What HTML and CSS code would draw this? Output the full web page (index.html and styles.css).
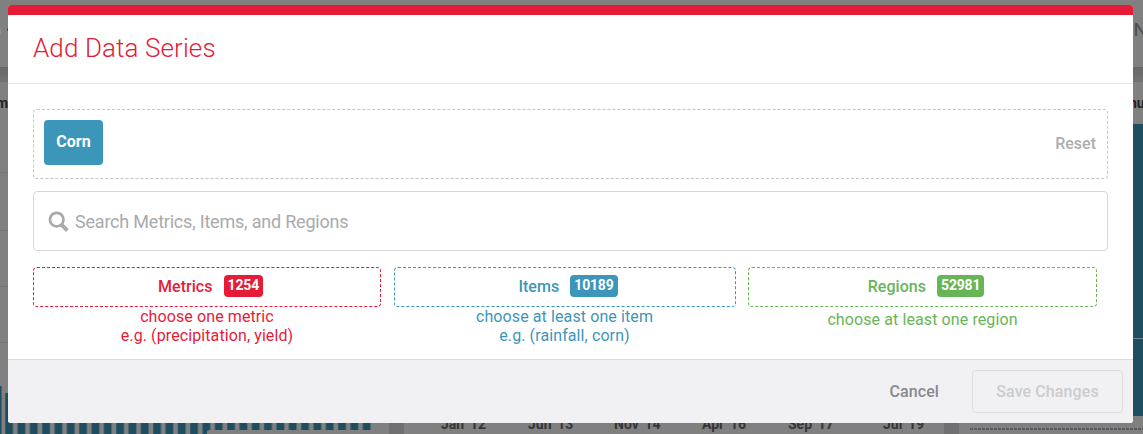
FILE: index.html
```html
<!DOCTYPE html>
<html lang="en">
<head>
<meta charset="utf-8">
<title>Add Data Series</title>
<link rel="stylesheet" href="styles.css">
</head>
<body>
<svg class="dashboard" width="1143" height="434" viewBox="0 0 1143 434" aria-hidden="true">
  <defs>
    <linearGradient id="shade" x1="0" y1="0" x2="0" y2="1"><stop offset="0" stop-color="#676767"/><stop offset="1" stop-color="#747474"/></linearGradient>
    <pattern id="bars" x="5" y="0" width="12.33" height="434" patternUnits="userSpaceOnUse"><rect width="8.2" height="434" fill="#426473"/><rect x=".6" width="7" height="434" fill="#1f4d60"/></pattern>
  </defs>
  <rect width="1143" height="434" fill="#808080"/>
  <rect y="67" width="1143" height="15" fill="url(#shade)"/>
  <path d="M7 29.5h3" stroke="#333" stroke-width="2"/>
  <path d="M0 29q1 2 0 5" stroke="#999" fill="none"/>
  <text class="bg-heading" x="-4" y="108">m</text>
  <path d="M0 172.5h8M0 230.5h8M0 286.5h8M0 342.5h8M0 398.5h8" stroke="#757575"/>
  <rect y="386" width="1.5" height="48" fill="#1f4d60"/>
  <rect x="5" y="393" width="367" height="41" fill="url(#bars)"/>
  <path d="M207 434v-2q0-2 2-2h165v4z" fill="#808080"/>
  <rect x="389" y="423" width="15" height="11" fill="#707070"/>
  <rect x="944" y="423" width="15" height="11" fill="#707070"/>
  <g class="bg-axis">
    <text x="441" y="429">Jan '12</text><text x="528" y="429">Jun '13</text><text x="614" y="429">Nov '14</text>
    <text x="702" y="429">Apr '16</text><text x="788" y="429">Sep '17</text><text x="883" y="429">Jul '19</text>
  </g>
  <path d="M970 429h173" stroke="#5c5c5c" stroke-width="2" stroke-dasharray="3 1"/>
  <text class="bg-nav" x="1133.5" y="36">N</text>
  <text class="bg-heading" x="1129" y="108">nu</text>
  <rect x="1133" y="124" width="10" height="292" fill="#1f4d60"/>
  <path d="M1133 338.5h10" stroke="#71858d"/>
</svg>
<main class="modal" role="dialog" aria-labelledby="dialog-title">
  <header class="modal-header"><h1 class="title" id="dialog-title">Add Data Series</h1></header>
  <section class="modal-body">
    <div class="selection"><span class="tag">Corn</span><span class="reset">Reset</span></div>
    <div class="search">
      <svg class="search-icon" width="21" height="21" viewBox="0 0 21 21"><circle cx="8.7" cy="8.6" r="6.8" fill="none" stroke="#a8a9ab" stroke-width="2.7"/><path d="M13.4 13.6l6 6" stroke="#a8a9ab" stroke-width="3.8"/></svg>
      <span class="placeholder">Search Metrics, Items, and Regions</span>
    </div>
    <div class="categories">
      <div class="category metrics">
        <div class="category-box"><span class="category-name">Metrics</span><span class="badge">1254</span></div>
        <p class="hint">choose one metric<br>e.g. (precipitation, yield)</p>
      </div>
      <div class="category items">
        <div class="category-box"><span class="category-name">Items</span><span class="badge">10189</span></div>
        <p class="hint">choose at least one item<br>e.g. (rainfall, corn)</p>
      </div>
      <div class="category regions">
        <div class="category-box"><span class="category-name">Regions</span><span class="badge">52981</span></div>
        <p class="hint">choose at least one region</p>
      </div>
    </div>
  </section>
  <footer class="modal-footer"><span class="cancel">Cancel</span><span class="save">Save Changes</span></footer>
</main>
</body>
</html>
```
FILE: styles.css
```css
* { box-sizing: border-box; }
body { margin: 0; width: 1143px; height: 434px; overflow: hidden; padding: 5px 10px 0 8px; font-family: Roboto, sans-serif; font-size: 16px; background: #808080; }
.dashboard { position: absolute; left: 0; top: 0; }
.bg-heading { font-size: 14px; font-weight: 700; fill: #222; }
.bg-nav { font-size: 19px; fill: #4c4c4c; }
.bg-axis { font-size: 14px; font-weight: 700; fill: #353535; }
.modal { position: relative; display: flex; flex-direction: column; height: 418px; background: #fff; border-radius: 3px; overflow: hidden; }
.modal-header { height: 79px; border-top: 10px solid #e51b38; border-bottom: 1px solid #e7e7e8; padding: 16px 25px 0; }
.title { margin: 0; font-size: 26px; font-weight: 300; line-height: 34px; letter-spacing: .1px; color: #e51b38; }
.modal-body { flex: 1; padding: 25px 25px 0; }
.selection { display: flex; justify-content: space-between; height: 70px; padding: 10px; border: 1px dashed #c5c5c6; border-radius: 4px; }
.tag { width: 59px; height: 45px; line-height: 43px; text-align: center; border-radius: 4px; background: #3c96ba; color: #fff; font-weight: 700; }
.reset { line-height: 47px; margin-right: 1px; color: #adaeaf; font-weight: 500; }
.search { display: flex; align-items: center; gap: 6px; height: 60px; margin: 12px 0 16px; padding: 0 14px; border: 1px solid #d7d8d9; border-radius: 4px; }
.search-icon { margin-top: 1px; }
.placeholder { font-size: 18px; letter-spacing: -.21px; color: #a9aaab; }
.categories { display: grid; grid-template-columns: 348px 342px 349px; column-gap: 12.5px; }
.category-box { display: flex; justify-content: center; height: 40px; padding: 7px 0 0 7px; border: 1px dashed currentColor; border-radius: 4px; }
.category-name { font-weight: 500; line-height: 24px; letter-spacing: .05px; margin-right: 11px; }
.badge { height: 22px; line-height: 21px; padding: 0 4px; border-radius: 4px; background: #e51b38; color: #fff; font-size: 14px; font-weight: 700; letter-spacing: -.17px; }
.hint { margin: 0; line-height: 19px; letter-spacing: .1px; text-align: center; }
.metrics { color: #e51b38; }
.items { color: #3c96ba; }
.items .badge { background: #3c96ba; }
.regions { color: #68b558; }
.regions .badge { background: #68b558; }
.regions .hint { padding-top: 3px; }
.modal-footer { display: flex; justify-content: flex-end; height: 64px; padding: 10px 10px 0; border-top: 1px solid #dcdcdd; background: #f1f1f4; font-weight: 500; }
.cancel { line-height: 43px; margin-right: 33px; letter-spacing: .1px; color: #88898b; }
.save { width: 151px; height: 43px; line-height: 41px; text-align: center; letter-spacing: .1px; border: 1px solid #dcdde0; border-radius: 4px; color: #cacbce; }
```
